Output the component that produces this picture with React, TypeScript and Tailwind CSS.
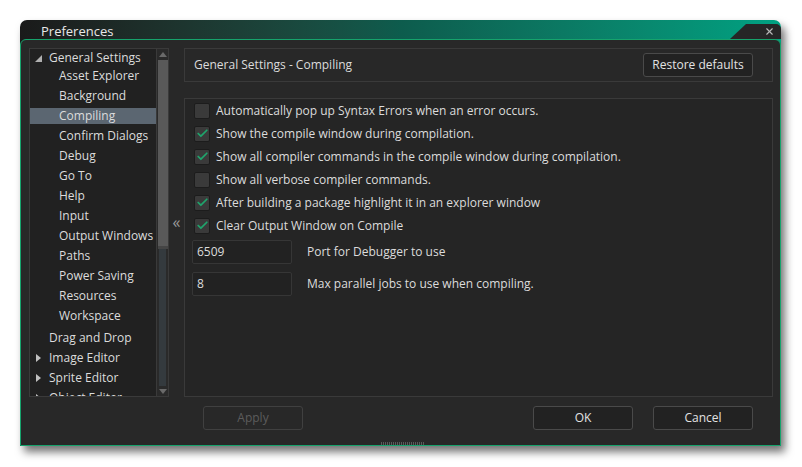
import { Check, X } from "lucide-react";

const font = "font-['Open_Sans',sans-serif]";

const tree: { label: string; level: number; arrow?: "open" | "closed"; selected?: boolean }[] = [
  { label: "General Settings", level: 0, arrow: "open" },
  { label: "Asset Explorer", level: 1 },
  { label: "Background", level: 1 },
  { label: "Compiling", level: 1, selected: true },
  { label: "Confirm Dialogs", level: 1 },
  { label: "Debug", level: 1 },
  { label: "Go To", level: 1 },
  { label: "Help", level: 1 },
  { label: "Input", level: 1 },
  { label: "Output Windows", level: 1 },
  { label: "Paths", level: 1 },
  { label: "Power Saving", level: 1 },
  { label: "Resources", level: 1 },
  { label: "Workspace", level: 1 },
  { label: "Drag and Drop", level: 0 },
  { label: "Image Editor", level: 0, arrow: "closed" },
  { label: "Sprite Editor", level: 0, arrow: "closed" },
  { label: "Object Editor", level: 0, arrow: "closed" },
];

const options = [
  { label: "Automatically pop up Syntax Errors when an error occurs.", checked: false },
  { label: "Show the compile window during compilation.", checked: true },
  { label: "Show all compiler commands in the compile window during compilation.", checked: true },
  { label: "Show all verbose compiler commands.", checked: false },
  { label: "After building a package highlight it in an explorer window", checked: true },
  { label: "Clear Output Window on Compile", checked: true },
];

function Checkbox({ checked }: { checked: boolean }) {
  return (
    <div className="w-[16px] h-[16px] rounded-[2px] bg-[#3a3a3a] border border-[#1c1c1c] flex items-center justify-center">
      {checked && <Check className="w-[13px] h-[13px] text-[#1fa56c]" strokeWidth={3.2} />}
    </div>
  );
}

function Button({ label, disabled }: { label: string; disabled?: boolean }) {
  return (
    <div
      className={`w-[100px] h-[24px] rounded-[3px] border flex items-center justify-center text-[12px] ${
        disabled ? "border-[#404040] text-[#5c5c5c]" : "border-[#4a4a4a] bg-[#222222] text-[#e2e2e2]"
      }`}
    >
      {label}
    </div>
  );
}

export default function App() {
  return (
    <div className={`w-[802px] h-[467px] bg-white pt-[20px] pl-[20px] ${font}`}>
      <div className="w-[761px] rounded-t-[7px] bg-gradient-to-r from-[#1a1a1a] via-[#0d5c4d] to-[#00a282] shadow-[4px_6px_8px_rgba(0,0,0,0.55)]">
        {/* Title bar */}
        <div className="relative h-[19px] flex items-center pl-[21px] pt-[3px]">
          <span className="text-[13px] text-[#e8e8e8] leading-none">Preferences</span>
          <div className="absolute right-0 bottom-0 w-[51px] h-[15px] bg-[#262626] rounded-tr-[5px] [clip-path:polygon(16px_0,100%_0,100%_100%,0_100%)] flex items-center justify-end pr-[6px]">
            <X className="w-[11px] h-[11px] text-[#b8b8b8]" strokeWidth={2.5} />
          </div>
        </div>

        {/* Body */}
        <div className="h-[407px] bg-[#282828] border border-[#16a36c] rounded-t-[6px] flex flex-col">
          <div className="flex pt-[8px] pl-[8px] pr-[7px] h-[358px]">
            {/* Tree */}
            <div className="w-[140px] h-[349px] border border-[#3a3a3a] bg-[#212121] flex overflow-hidden">
              <div className="flex-1 overflow-hidden">
                {tree.map((t, i) => (
                  <div
                    key={t.label}
                    className={`flex items-center ${i === 0 ? "h-[17px]" : "h-[20px]"} ${i === 14 ? "mt-[2px]" : ""}`}
                  >
                    <div
                      className={`w-full h-[16px] flex items-center text-[12px] text-[#dcdcdc] ${
                        t.selected ? "bg-[#5b6671]" : ""
                      } ${t.level === 0 ? "pl-[19px]" : "pl-[29px]"} relative`}
                    >
                      {t.arrow === "open" && (
                        <span className="absolute left-[5px] top-[5px] w-0 h-0 border-l-[7px] border-l-transparent border-b-[7px] border-b-[#b0b0b0]" />
                      )}
                      {t.arrow === "closed" && (
                        <span className="absolute left-[6px] top-[4px] w-0 h-0 border-t-[4.5px] border-t-transparent border-b-[4.5px] border-b-transparent border-l-[5px] border-l-[#c0c0c0]" />
                      )}
                      {t.label}
                    </div>
                  </div>
                ))}
              </div>
              {/* Scrollbar */}
              <div className="w-[12px] border-l border-[#3a3a3a] bg-[#2a2a2a] flex flex-col items-center">
                <div className="h-[10px] flex items-center justify-center">
                  <span className="w-0 h-0 border-l-[4px] border-l-transparent border-r-[4px] border-r-transparent border-b-[5px] border-b-[#6a6a6a]" />
                </div>
                <div className="w-[10px] h-[189px] bg-[#595959] border-b-[3px] border-[#454545] mt-[1px]" />
                <div className="w-[7px] flex-1 bg-[#343a3e]" />
                <div className="h-[10px] flex items-center justify-center">
                  <span className="w-0 h-0 border-l-[4px] border-l-transparent border-r-[4px] border-r-transparent border-t-[5px] border-t-[#6a6a6a]" />
                </div>
              </div>
            </div>

            {/* Collapse handle */}
            <div className="w-[15px] flex items-center justify-center text-[#9a9a9a] text-[16px] leading-none pb-[2px]">
              «
            </div>

            {/* Right side */}
            <div className="w-[589px] flex flex-col">
              <div className="h-[34px] border border-[#3a3a3a] flex items-center justify-between pl-[9px] pr-[19px]">
                <span className="text-[12px] text-[#dcdcdc]">General Settings - Compiling</span>
                <div className="w-[110px] h-[24px] rounded-[3px] border border-[#4a4a4a] bg-[#222222] flex items-center justify-center text-[12px] text-[#e2e2e2]">
                  Restore defaults
                </div>
              </div>
              <div className="mt-[16px] h-[299px] border border-[#3a3a3a] bg-[#252525] pl-[9px]">
                {options.map((o) => (
                  <div key={o.label} className="h-[23px] flex items-center gap-[6px] text-[12px] text-[#dcdcdc]">
                    <Checkbox checked={o.checked} />
                    <span>{o.label}</span>
                  </div>
                ))}
                <div className="mt-[3px] flex flex-col gap-[8px]">
                  {[
                    { v: "6509", l: "Port for Debugger to use" },
                    { v: "8", l: "Max parallel jobs to use when compiling." },
                  ].map((f) => (
                    <div key={f.l} className="flex items-center text-[12px] text-[#dcdcdc]">
                      <div className="w-[100px] h-[24px] border border-[#363636] bg-[#222222] rounded-[2px] flex items-center pl-[4px] -ml-[2px]">
                        {f.v}
                      </div>
                      <span className="ml-[15px]">{f.l}</span>
                    </div>
                  ))}
                </div>
              </div>
            </div>
          </div>

          {/* Bottom buttons */}
          <div className="flex items-center pl-[182px] pr-[27px] mt-[8px]">
            <Button label="Apply" disabled />
            <div className="flex-1" />
            <Button label="OK" />
            <div className="w-[20px]" />
            <Button label="Cancel" />
          </div>
          <div className="flex-1 flex items-end justify-center">
            <div className="w-[44px] h-[3px] ml-[4px] bg-[repeating-linear-gradient(90deg,#5a5a5a_0_1px,transparent_1px_2px)]" />
          </div>
        </div>
      </div>
    </div>
  );
}
